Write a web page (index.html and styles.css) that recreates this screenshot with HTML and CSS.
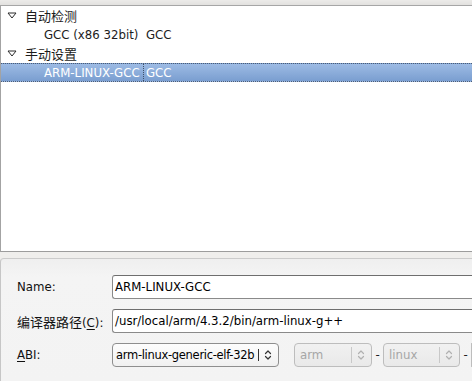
FILE: index.html
```html
<!DOCTYPE html>
<html lang="zh-CN">
<head>
    <meta charset="UTF-8">
    <title>编译器设置</title>
    <link rel="stylesheet" href="styles.css">
</head>
<body>
    <div class="header-strip"></div>

    <div class="tree">
        <div class="tree-row group">
            <svg class="expander" width="10" height="7" viewBox="0 0 10 7"><path d="M1 1 H9 L5 6 Z" fill="none" stroke="#2a2a2a" stroke-width="1"/></svg>
            <span class="zh">自动检测</span>
        </div>
        <div class="tree-row leaf">
            <span class="col-name">GCC (x86 32bit)</span>
            <span class="col-type">GCC</span>
        </div>
        <div class="tree-row group">
            <svg class="expander" width="10" height="7" viewBox="0 0 10 7"><path d="M1 1 H9 L5 6 Z" fill="none" stroke="#2a2a2a" stroke-width="1"/></svg>
            <span class="zh">手动设置</span>
        </div>
        <div class="tree-row leaf selected">
            <span class="col-name">ARM-LINUX-GCC</span>
            <span class="col-type">GCC</span>
        </div>
    </div>

    <div class="details">
        <div class="form">
            <label>Name:</label>
            <div class="text-field">ARM-LINUX-GCC</div>

            <label><span class="zh">编译器路径</span>(<u>C</u>):</label>
            <div class="text-field">/usr/local/arm/4.3.2/bin/arm-linux-g++</div>

            <label><u>A</u>BI:</label>
            <div class="abi-row">
                <div class="combo main">
                    <span class="combo-text">arm-linux-generic-elf-32b</span>
                    <span class="combo-sep"></span>
                    <svg class="updown" width="8" height="12" viewBox="0 0 8 12"><path d="M1.5 4.5 L4 2 L6.5 4.5 M1.5 7.5 L4 10 L6.5 7.5" fill="none" stroke="#333" stroke-width="1.2" stroke-linecap="round" stroke-linejoin="round"/></svg>
                </div>
                <div class="combo disabled">
                    <span class="combo-text">arm</span>
                    <span class="combo-sep"></span>
                    <svg class="updown" width="8" height="12" viewBox="0 0 8 12"><path d="M1.5 4.5 L4 2 L6.5 4.5 M1.5 7.5 L4 10 L6.5 7.5" fill="none" stroke="#b0b0b0" stroke-width="1.2" stroke-linecap="round" stroke-linejoin="round"/></svg>
                </div>
                <span class="dash">-</span>
                <div class="combo disabled">
                    <span class="combo-text">linux</span>
                    <span class="combo-sep"></span>
                    <svg class="updown" width="8" height="12" viewBox="0 0 8 12"><path d="M1.5 4.5 L4 2 L6.5 4.5 M1.5 7.5 L4 10 L6.5 7.5" fill="none" stroke="#b0b0b0" stroke-width="1.2" stroke-linecap="round" stroke-linejoin="round"/></svg>
                </div>
                <span class="dash">-</span>
                <div class="combo-edge"></div>
            </div>
        </div>
    </div>
</body>
</html>
```

FILE: styles.css
```css
body {
    margin: 0;
    width: 472px;
    height: 381px;
    overflow: hidden;
    display: flex;
    flex-direction: column;
    background-color: #efeeec;
    font-family: "DejaVu Sans", "Noto Sans CJK SC", sans-serif;
    font-size: 11.75px;
    color: #000;
}
.zh {
    font-size: 13px;
}
.header-strip {
    height: 5px;
    background: linear-gradient(#ecebe9, #e2e1df);
    border-bottom: 1px solid #a6a6a6;
}
.tree {
    height: 245px;
    background-color: #fff;
    border-left: 1px solid #a3a3a3;
    border-bottom: 1px solid #9c9c9c;
}
.tree-row {
    height: 19px;
    box-sizing: border-box;
    display: flex;
    align-items: center;
    color: #1c1c1c;
    white-space: nowrap;
}
.tree-row.group {
    padding-left: 6px;
}
.expander {
    margin-right: 8px;
}
.col-name {
    box-sizing: border-box;
    width: 142px;
    padding-left: 43px;
}
.col-type {
    padding-left: 2px;
    height: 100%;
    display: flex;
    align-items: center;
    border-left: 1px solid transparent;
}
.tree-row.selected {
    background: linear-gradient(#9dbbe4, #7a9ed0);
    border-top: 1px dotted #4d5d75;
    border-bottom: 1px dotted #4d5d75;
    color: #fff;
}
.tree-row.selected .col-type {
    border-left: 1px dotted #3f5068;
}
.details {
    flex: 1;
    margin-top: 6px;
    padding: 16px 0 0 16px;
    border-top: 1px solid #cbcbcb;
    border-left: 1px solid #c6c6c6;
    border-top-left-radius: 4px;
    background: linear-gradient(#efefef, #f4f4f4 18px, #f3f3f3);
}
.form {
    display: grid;
    grid-template-columns: 95px 1fr;
    row-gap: 10px;
    align-items: center;
}
.form label {
    white-space: nowrap;
    color: #111;
}
.form u {
    text-decoration-thickness: 1px;
    text-underline-offset: 2px;
}
.text-field {
    height: 24px;
    box-sizing: border-box;
    border: 1px solid #8a8a8a;
    border-top-color: #6e6e6e;
    border-right: none;
    border-radius: 3px 0 0 3px;
    background-color: #fff;
    padding-left: 2px;
    line-height: 22px;
    white-space: nowrap;
    overflow: hidden;
}
.abi-row {
    display: flex;
    align-items: center;
    overflow: hidden;
}
.combo {
    height: 24px;
    box-sizing: border-box;
    border: 1px solid #8e8e8e;
    border-radius: 4px;
    background: linear-gradient(#fdfdfd, #f0f0f0);
    display: flex;
    align-items: center;
    flex-shrink: 0;
}
.combo-text {
    flex: 1;
    overflow: hidden;
    white-space: nowrap;
}
.combo.main {
    width: 167px;
    margin-right: 15px;
}
.combo.main .combo-text {
    padding-left: 3px;
    font-size: 11.5px;
    letter-spacing: -0.3px;
}
.combo.main .combo-sep {
    width: 1px;
    height: 12px;
    background-color: #333;
}
.updown {
    margin: 0 6px 0 5px;
}
.combo.disabled {
    width: 78px;
    border-color: #bdbdbd;
    background: linear-gradient(#f1f1f1, #e9e9e9);
    color: #a6a6a6;
}
.combo.disabled + .dash + .combo.disabled {
    width: 77px;
}
.combo.disabled .combo-text {
    padding-left: 5px;
}
.combo.disabled .combo-sep {
    width: 1px;
    height: 16px;
    background-color: #c8c8c8;
}
.dash {
    width: 11px;
    text-align: center;
    color: #222;
    flex-shrink: 0;
}
.combo-edge {
    flex: 1;
    height: 24px;
    box-sizing: border-box;
    border: 1px solid #bdbdbd;
    border-right: none;
    border-radius: 4px 0 0 4px;
    background: linear-gradient(#f1f1f1, #e9e9e9);
}
```
